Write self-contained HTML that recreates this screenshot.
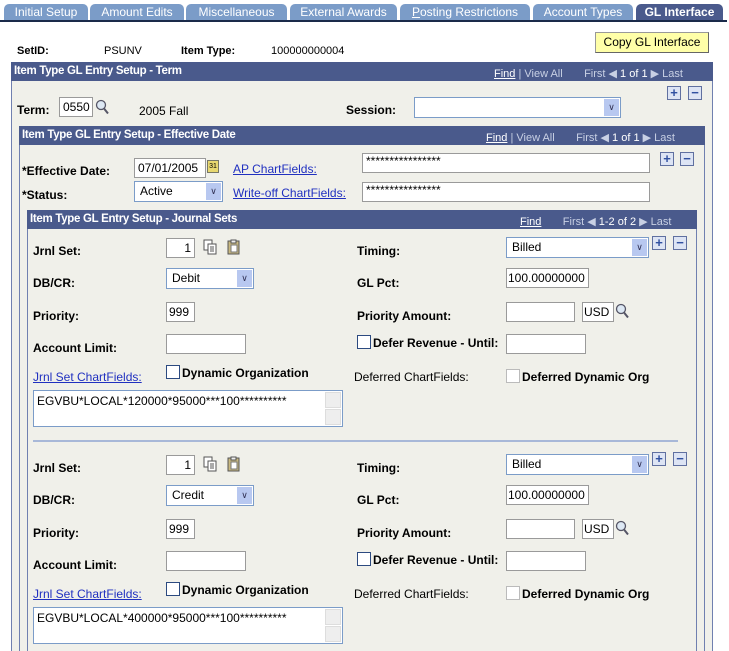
<!DOCTYPE html>
<html><head><meta charset="utf-8"><style>
*{box-sizing:border-box;margin:0;padding:0}
body{width:729px;height:651px;background:#fff;position:relative;overflow:hidden;font-family:"Liberation Sans",Arial,sans-serif;font-size:11px;color:#000}
.a{position:absolute;white-space:nowrap}
.tab{position:absolute;top:4px;height:17px;background:#7b9cc8;color:#fff;font-size:12px;text-align:center;line-height:17px;border-radius:5px 5px 0 0}
.b{font-weight:bold}
.bar{position:absolute;background:#4a5a8c;color:#fff;height:19px}
.bar .t{position:absolute;left:3px;top:3px;font-weight:bold;font-size:11.5px;letter-spacing:-0.3px}
.nav{position:absolute;top:5px;font-size:11px;color:#c8d0e4}
.nav u{color:#fff}
.box{position:absolute;background:#f0f0ea;border-left:1px solid #7080b0;border-right:1px solid #7080b0}
.in{position:absolute;background:#fff;border:1px solid #9a9a9a;height:20px;font-size:12px;line-height:18px;padding:0 3px}
.sel{position:absolute;background:#fff;border:1px solid #7b9cc8;height:21px;font-size:12px;line-height:19px;padding:0 5px}
.sel i{position:absolute;right:1px;top:1px;width:15px;height:17px;background:#b8c8f0;font-style:normal;color:#335;font-size:9px;text-align:center;line-height:17px}
.lnk{color:#2030c0;text-decoration:underline}
.pm{position:absolute;width:14px;height:14px;border:1px solid #6070a0;background:#dde4f4;color:#3050a0;font-weight:bold;text-align:center;line-height:11px;font-size:13px}
.cb{position:absolute;width:14px;height:14px;background:#fff;border:1px solid #2c4a80}
.cbd{border-color:#bbb}
.ta{position:absolute;background:#fff;border:1px solid #7b9cc8;font-size:12px;padding:3px}
.ta i{position:absolute;right:1px;top:1px;width:16px;height:16px;background:#eee;border:1px solid #ddd}
.ta i+i{top:18px}
.mag{position:absolute;width:14px;height:16px}
.ic{position:absolute;width:14px;height:16px}
</style></head><body>

<div class="tab" style="left:4px;width:84px">Initial Setup</div>
<div class="tab" style="left:90px;width:94px">Amount Edits</div>
<div class="tab" style="left:186px;width:101px">Miscellaneous</div>
<div class="tab" style="left:290px;width:107px">External Awards</div>
<div class="tab" style="left:400px;width:130px"><u>P</u>osting Restrictions</div>
<div class="tab" style="left:533px;width:100px">Account Types</div>
<div class="tab b" style="left:636px;width:87px;background:#4a5a8c">GL Interface</div>
<div class="a" style="left:0;top:20px;width:727px;height:2px;background:#1a2a4a"></div>

<div class="a b" style="left:17px;top:45px">SetID:</div>
<div class="a" style="left:104px;top:45px">PSUNV</div>
<div class="a b" style="left:181px;top:45px">Item Type:</div>
<div class="a" style="left:271px;top:45px">100000000004</div>
<div class="a" style="left:595px;top:32px;width:114px;height:21px;background:#ffffa8;border:1px solid #999;border-right-color:#666;border-bottom-color:#666;text-align:center;line-height:19px;font-size:12px">Copy GL Interface</div>

<div class="box" style="left:11px;top:81px;width:702px;height:570px"></div>
<div class="bar" style="left:11px;top:62px;width:702px"><div class="t">Item Type GL Entry Setup - Term</div><div class="nav" style="left:483px"><u>Find</u> | View All &nbsp; &nbsp; &nbsp; First &#9664; <span style="color:#fff">1 of 1</span> &#9654; Last</div></div>
<div class="pm" style="left:667px;top:86px">+</div><div class="pm" style="left:688px;top:86px">−</div>
<div class="a b" style="left:17px;top:103px;font-size:12px">Term:</div>
<div class="in" style="left:59px;top:97px;width:34px">0550</div>
<svg class="mag" style="left:95px;top:99px" viewBox="0 0 14 16"><circle cx="6" cy="6" r="4.5" fill="#dde8f4" stroke="#556" stroke-width="1.3"/><path d="M9 9.5l4 5" stroke="#556" stroke-width="2"/></svg>
<div class="a" style="left:139px;top:104px;font-size:12px">2005 Fall</div>
<div class="a b" style="left:346px;top:103px;font-size:12px">Session:</div>
<div class="sel" style="left:414px;top:97px;width:207px"><i>&#8744;</i></div>

<div class="box" style="left:19px;top:145px;width:686px;height:506px"></div>
<div class="bar" style="left:19px;top:126px;width:686px"><div class="t">Item Type GL Entry Setup - Effective Date</div><div class="nav" style="left:467px"><u>Find</u> | View All &nbsp; &nbsp; &nbsp; First &#9664; <span style="color:#fff">1 of 1</span> &#9654; Last</div></div>
<div class="a b" style="left:22px;top:164px;font-size:12px">*Effective Date:</div>
<div class="in" style="left:134px;top:158px;width:72px">07/01/2005</div>
<div class="a" style="left:207px;top:160px;width:12px;height:13px;background:#e8d870;border:1px solid #776;font-size:7px;text-align:center;line-height:11px">31</div>
<div class="a lnk" style="left:233px;top:162px;font-size:12px">AP ChartFields:</div>
<div class="in" style="left:362px;top:153px;width:288px;line-height:14px">****************</div>
<div class="pm" style="left:660px;top:152px">+</div><div class="pm" style="left:680px;top:152px">−</div>
<div class="a b" style="left:22px;top:188px;font-size:12px">*Status:</div>
<div class="sel" style="left:134px;top:181px;width:89px">Active<i>&#8744;</i></div>
<div class="a lnk" style="left:233px;top:186px;font-size:12px">Write-off ChartFields:</div>
<div class="in" style="left:362px;top:182px;width:288px;line-height:14px">****************</div>

<div class="box" style="left:27px;top:229px;width:670px;height:422px"></div>
<div class="bar" style="left:27px;top:210px;width:670px"><div class="t">Item Type GL Entry Setup - Journal Sets</div><div class="nav" style="left:493px"><u>Find</u> &nbsp; &nbsp; &nbsp; First &#9664; <span style="color:#fff">1-2 of 2</span> &#9654; Last</div></div>

<!-- set 1 -->
<div class="a b" style="left:33px;top:244px;font-size:12px">Jrnl Set:</div>
<div class="in" style="left:166px;top:238px;width:29px;text-align:right">1</div>
<svg class="ic" style="left:203px;top:239px" viewBox="0 0 14 16"><rect x="1" y="1" width="8" height="10" fill="#fff" stroke="#555"/><rect x="5" y="5" width="8" height="10" fill="#fff" stroke="#555"/><path d="M7 8h4M7 10h4M7 12h4" stroke="#555"/></svg>
<svg class="ic" style="left:227px;top:239px" viewBox="0 0 14 16"><rect x="1" y="2" width="11" height="13" fill="#c8b880" stroke="#555"/><rect x="4" y="1" width="5" height="3" fill="#eee" stroke="#555"/><rect x="4" y="6" width="6" height="7" fill="#fff" stroke="#777"/></svg>
<div class="a b" style="left:357px;top:244px;font-size:12px">Timing:</div>
<div class="sel" style="left:506px;top:237px;width:143px">Billed<i>&#8744;</i></div>
<div class="pm" style="left:652px;top:236px">+</div><div class="pm" style="left:673px;top:236px">−</div>
<div class="a b" style="left:33px;top:276px;font-size:12px">DB/CR:</div>
<div class="sel" style="left:166px;top:268px;width:88px">Debit<i>&#8744;</i></div>
<div class="a b" style="left:357px;top:276px;font-size:12px">GL Pct:</div>
<div class="in" style="left:506px;top:268px;width:83px;padding:0 1px">100.00000000</div>
<div class="a b" style="left:33px;top:309px;font-size:12px">Priority:</div>
<div class="in" style="left:166px;top:302px;width:29px;padding:0 2px">999</div>
<div class="a b" style="left:357px;top:309px;font-size:12px">Priority Amount:</div>
<div class="in" style="left:506px;top:302px;width:69px"></div>
<div class="in" style="left:582px;top:302px;width:32px;padding:0 1px">USD</div>
<svg class="mag" style="left:615px;top:303px" viewBox="0 0 14 16"><circle cx="6" cy="6" r="4.5" fill="#dde8f4" stroke="#556" stroke-width="1.3"/><path d="M9 9.5l4 5" stroke="#556" stroke-width="2"/></svg>
<div class="a b" style="left:33px;top:341px;font-size:12px">Account Limit:</div>
<div class="in" style="left:166px;top:334px;width:80px"></div>
<div class="cb" style="left:357px;top:335px"></div>
<div class="a b" style="left:373px;top:336px;font-size:12px">Defer Revenue - Until:</div>
<div class="in" style="left:506px;top:334px;width:80px"></div>
<div class="a lnk" style="left:33px;top:370px;font-size:12px">Jrnl Set ChartFields:</div>
<div class="cb" style="left:166px;top:365px"></div>
<div class="a b" style="left:182px;top:366px;font-size:12px">Dynamic Organization</div>
<div class="a" style="left:354px;top:370px;font-size:12px">Deferred ChartFields:</div>
<div class="cb cbd" style="left:506px;top:369px"></div>
<div class="a b" style="left:522px;top:370px;font-size:12px">Deferred Dynamic Org</div>
<div class="ta" style="left:33px;top:390px;width:310px;height:37px">EGVBU*LOCAL*120000*95000***100**********<i></i><i></i></div>

<div class="a" style="left:33px;top:440px;width:645px;height:2px;background:#a8b8d8"></div>

<!-- set 2 -->
<div class="a b" style="left:33px;top:461px;font-size:12px">Jrnl Set:</div>
<div class="in" style="left:166px;top:455px;width:29px;text-align:right">1</div>
<svg class="ic" style="left:203px;top:456px" viewBox="0 0 14 16"><rect x="1" y="1" width="8" height="10" fill="#fff" stroke="#555"/><rect x="5" y="5" width="8" height="10" fill="#fff" stroke="#555"/><path d="M7 8h4M7 10h4M7 12h4" stroke="#555"/></svg>
<svg class="ic" style="left:227px;top:456px" viewBox="0 0 14 16"><rect x="1" y="2" width="11" height="13" fill="#c8b880" stroke="#555"/><rect x="4" y="1" width="5" height="3" fill="#eee" stroke="#555"/><rect x="4" y="6" width="6" height="7" fill="#fff" stroke="#777"/></svg>
<div class="a b" style="left:357px;top:461px;font-size:12px">Timing:</div>
<div class="sel" style="left:506px;top:454px;width:143px">Billed<i>&#8744;</i></div>
<div class="pm" style="left:652px;top:452px">+</div><div class="pm" style="left:673px;top:452px">−</div>
<div class="a b" style="left:33px;top:493px;font-size:12px">DB/CR:</div>
<div class="sel" style="left:166px;top:485px;width:88px">Credit<i>&#8744;</i></div>
<div class="a b" style="left:357px;top:493px;font-size:12px">GL Pct:</div>
<div class="in" style="left:506px;top:485px;width:83px;padding:0 1px">100.00000000</div>
<div class="a b" style="left:33px;top:526px;font-size:12px">Priority:</div>
<div class="in" style="left:166px;top:519px;width:29px;padding:0 2px">999</div>
<div class="a b" style="left:357px;top:526px;font-size:12px">Priority Amount:</div>
<div class="in" style="left:506px;top:519px;width:69px"></div>
<div class="in" style="left:582px;top:519px;width:32px;padding:0 1px">USD</div>
<svg class="mag" style="left:615px;top:520px" viewBox="0 0 14 16"><circle cx="6" cy="6" r="4.5" fill="#dde8f4" stroke="#556" stroke-width="1.3"/><path d="M9 9.5l4 5" stroke="#556" stroke-width="2"/></svg>
<div class="a b" style="left:33px;top:558px;font-size:12px">Account Limit:</div>
<div class="in" style="left:166px;top:551px;width:80px"></div>
<div class="cb" style="left:357px;top:552px"></div>
<div class="a b" style="left:373px;top:553px;font-size:12px">Defer Revenue - Until:</div>
<div class="in" style="left:506px;top:551px;width:80px"></div>
<div class="a lnk" style="left:33px;top:587px;font-size:12px">Jrnl Set ChartFields:</div>
<div class="cb" style="left:166px;top:582px"></div>
<div class="a b" style="left:182px;top:583px;font-size:12px">Dynamic Organization</div>
<div class="a" style="left:354px;top:587px;font-size:12px">Deferred ChartFields:</div>
<div class="cb cbd" style="left:506px;top:586px"></div>
<div class="a b" style="left:522px;top:587px;font-size:12px">Deferred Dynamic Org</div>
<div class="ta" style="left:33px;top:607px;width:310px;height:37px">EGVBU*LOCAL*400000*95000***100**********<i></i><i></i></div>

</body></html>
